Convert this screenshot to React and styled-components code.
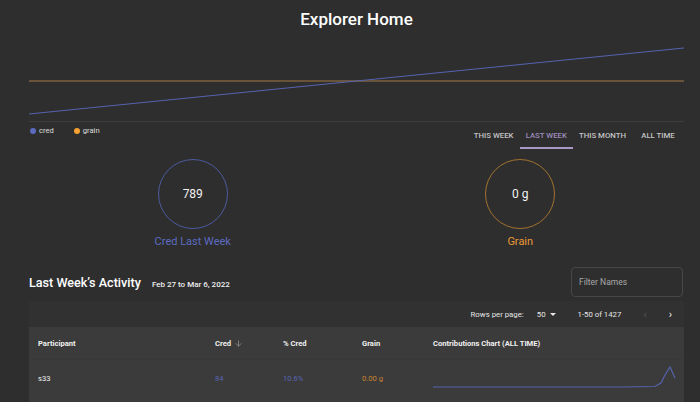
import React from "react";
import styled, { createGlobalStyle } from "styled-components";
import { ArrowDown } from "lucide-react";

const GlobalStyle = createGlobalStyle`
  body {
    margin: 0;
    background: #2e2e2e;
    font-family: Roboto, "Liberation Sans", sans-serif;
    color: #fff;
  }
`;

const Page = styled.div`
  width: 655px;
  padding: 0 16px 0 29px;
`;

const Title = styled.h1`
  margin: 0;
  padding-top: 9px;
  height: 20px;
  text-align: center;
  font-size: 17px;
  font-weight: 500;
  line-height: 20px;
`;

const ChartBox = styled.div`
  height: 92px;
  border-bottom: 1px solid #3d3d3d;
`;

const LegendRow = styled.div`
  display: flex;
  justify-content: space-between;
  align-items: flex-start;
  height: 27px;
`;

const Legend = styled.div`
  display: flex;
  gap: 20px;
  padding: 4px 0 0 1px;
`;

const LegendItem = styled.div`
  display: flex;
  align-items: center;
  gap: 3px;
  font-size: 7.6px;
  color: #ddd;
`;

const Dot = styled.span`
  width: 6px;
  height: 6px;
  border-radius: 50%;
  background: ${(p) => p.$color};
`;

const Tabs = styled.div`
  display: flex;
  margin-top: 1px;
`;

const Tab = styled.div`
  min-width: 52px;
  padding: 0 6px;
  box-sizing: border-box;
  height: 26px;
  display: flex;
  align-items: center;
  justify-content: center;
  font-size: 7.8px;
  font-weight: 500;
  color: ${(p) => (p.$active ? "#9d8cbb" : "#c4c4c4")};
  border-bottom: 2px solid ${(p) => (p.$active ? "#a898c6" : "transparent")};
`;

const Stats = styled.div`
  display: grid;
  grid-template-columns: 1fr 1fr;
  padding-top: 10px;
  height: 107px;
`;

const Stat = styled.div`
  display: flex;
  flex-direction: column;
  align-items: center;
`;

const Ring = styled.div`
  width: 68px;
  height: 68px;
  border-radius: 50%;
  border: 1px solid ${(p) => p.$color};
  display: flex;
  align-items: center;
  justify-content: center;
  font-size: 12px;
  color: #f2f2f2;
`;

const StatLabel = styled.div`
  margin-top: 6px;
  font-size: 11px;
  color: ${(p) => p.$color};
`;

const ActivityHead = styled.div`
  display: flex;
  justify-content: space-between;
  align-items: center;
  height: 32px;
`;

const HeadLeft = styled.div`
  display: flex;
  align-items: baseline;
  gap: 11px;
`;

const HeadTitle = styled.h2`
  margin: 0;
  font-size: 12.6px;
  font-weight: 500;
`;

const HeadDates = styled.span`
  font-size: 8px;
  font-weight: 500;
  color: #eee;
`;

const FilterInput = styled.input`
  width: 112px;
  height: 30px;
  box-sizing: border-box;
  margin-right: 1px;
  padding: 0 7px;
  background: transparent;
  border: 1px solid #474747;
  border-radius: 4px;
  font-family: inherit;
  font-size: 8.5px;
  color: #ddd;
  &::placeholder {
    color: #a8a8a8;
  }
`;

const Paper = styled.div`
  margin-top: 3px;
  background: #313131;
`;

const Pager = styled.div`
  display: flex;
  justify-content: flex-end;
  align-items: center;
  height: 26px;
  padding-right: 12px;
  font-size: 7.8px;
  color: #e6e6e6;
`;

const PagerSelect = styled.span`
  display: flex;
  align-items: center;
  gap: 4px;
  margin: 0 22px 0 13px;
`;

const Caret = styled.span`
  width: 0;
  height: 0;
  border-left: 3px solid transparent;
  border-right: 3px solid transparent;
  border-top: 3px solid #e6e6e6;
`;

const Arrow = styled.span`
  margin-left: ${(p) => p.$gap}px;
  font-size: 11px;
  color: ${(p) => (p.$disabled ? "#5a5a5a" : "#eee")};
`;

const Row = styled.div`
  display: grid;
  grid-template-columns: 177px 68px 79px 71px 1fr;
  align-items: center;
  height: ${(p) => p.$h}px;
  padding-bottom: ${(p) => p.$pb || 0}px;
  background: #3b3b3b;
  border-bottom: 1px solid #383838;
  font-size: 7.6px;
  font-weight: ${(p) => (p.$head ? 700 : 400)};
`;

const Cell = styled.div`
  padding-left: 9px;
  display: flex;
  align-items: center;
  gap: 3px;
  color: ${(p) => p.$color || "#f0f0f0"};
`;

const Spark = styled.svg`
  display: block;
`;

export default function App() {
  return (
    <>
      <GlobalStyle />
      <Page>
        <Title>Explorer Home</Title>
        <ChartBox>
          <svg width="655" height="92">
            <line x1="0" y1="52" x2="655" y2="52" stroke="#a57b45" strokeWidth="1" />
            <line x1="0" y1="85" x2="655" y2="19" stroke="#5563b0" strokeWidth="1" />
          </svg>
        </ChartBox>
        <LegendRow>
          <Legend>
            <LegendItem>
              <Dot $color="#5c6bc0" />
              cred
            </LegendItem>
            <LegendItem>
              <Dot $color="#f5a234" />
              grain
            </LegendItem>
          </Legend>
          <Tabs>
            <Tab>THIS WEEK</Tab>
            <Tab $active>LAST WEEK</Tab>
            <Tab>THIS MONTH</Tab>
            <Tab>ALL TIME</Tab>
          </Tabs>
        </LegendRow>
        <Stats>
          <Stat>
            <Ring $color="#4d5aa0">789</Ring>
            <StatLabel $color="#5c6bc0">Cred Last Week</StatLabel>
          </Stat>
          <Stat>
            <Ring $color="#a3722f">0 g</Ring>
            <StatLabel $color="#eb9a36">Grain</StatLabel>
          </Stat>
        </Stats>
        <ActivityHead>
          <HeadLeft>
            <HeadTitle>Last Week’s Activity</HeadTitle>
            <HeadDates>Feb 27 to Mar 6, 2022</HeadDates>
          </HeadLeft>
          <FilterInput placeholder="Filter Names" />
        </ActivityHead>
        <Paper>
          <Pager>
            Rows per page:
            <PagerSelect>
              50 <Caret />
            </PagerSelect>
            1-50 of 1427
            <Arrow $gap={22} $disabled>‹</Arrow>
            <Arrow $gap={22}>›</Arrow>
          </Pager>
          <Row $h={32} $head>
            <Cell>Participant</Cell>
            <Cell>
              Cred <ArrowDown size={9} color="#a8a8a8" strokeWidth={1.6} />
            </Cell>
            <Cell>% Cred</Cell>
            <Cell>Grain</Cell>
            <Cell>Contributions Chart (ALL TIME)</Cell>
          </Row>
          <Row $h={36} $pb={8}>
            <Cell>s33</Cell>
            <Cell $color="#5664b4">84</Cell>
            <Cell $color="#5664b4">10.6%</Cell>
            <Cell $color="#c98130">0.00 g</Cell>
            <Cell>
              <Spark width="244" height="26">
                <polyline
                  points="0,22 190,22 222,21.5 228,18 232,10 237,2 242,13"
                  fill="none"
                  stroke="#5563b0"
                  strokeWidth="1.2"
                />
              </Spark>
            </Cell>
          </Row>
        </Paper>
      </Page>
    </>
  );
}
